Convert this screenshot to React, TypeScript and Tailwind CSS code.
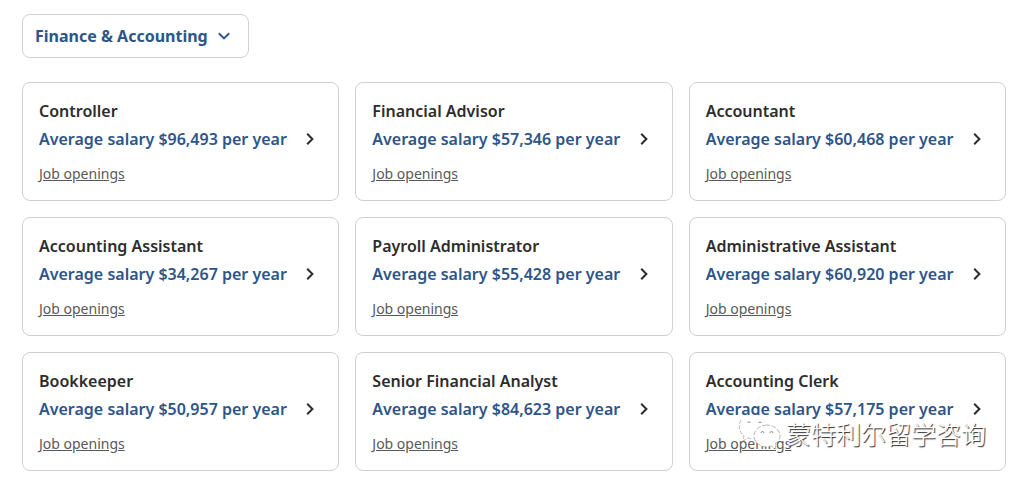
import React, { useState } from 'react';

interface Job {
    title: string;
    salary: string;
}

const categories = ['Finance & Accounting'];

const jobs: Job[] = [
    { title: 'Controller', salary: '$96,493' },
    { title: 'Financial Advisor', salary: '$57,346' },
    { title: 'Accountant', salary: '$60,468' },
    { title: 'Accounting Assistant', salary: '$34,267' },
    { title: 'Payroll Administrator', salary: '$55,428' },
    { title: 'Administrative Assistant', salary: '$60,920' },
    { title: 'Bookkeeper', salary: '$50,957' },
    { title: 'Senior Financial Analyst', salary: '$84,623' },
    { title: 'Accounting Clerk', salary: '$57,175' },
];

const JobCard: React.FC<{ job: Job }> = ({ job }) => (
    <li className="rounded-lg border border-[#d0d0d2] p-4">
        <h2 className="text-base font-semibold text-[#2d2d2d]">{job.title}</h2>
        <a href="#salary" className="mt-1 flex items-center justify-between pr-2 text-base font-semibold text-[#2d5589]">
            <span className="whitespace-nowrap">Average salary {job.salary} per year</span>
            <svg className="ml-2 h-3 w-2 shrink-0" viewBox="0 0 8 12" fill="none" stroke="#2d2d2d" strokeWidth="2">
                <path d="M1.2 0.8 6.4 6 1.2 11.2" />
            </svg>
        </a>
        <a href="#openings" className="mt-3 block w-fit text-sm leading-[21px] text-[#595959] underline">
            Job openings
        </a>
    </li>
);

const Watermark: React.FC = () => (
    <div className="pointer-events-none absolute right-[34px] bottom-7 flex items-center gap-1">
        {/* two chat bubbles */}
        <svg className="h-9 w-11" viewBox="0 0 44 36" fill="#fff" stroke="#999" strokeWidth="0.7">
            <path stroke="none" d="M16-1C8-1 1 5 1 12c0 4 2 7 5 9l-1 5 5-3 6 1c8 0 15-5 15-12S24-1 16-1Z" />
            <path fill="none" strokeDasharray="4 1.5" d="M3 5c-3 5-2 12 3 16l-1 5 5-3 4 1" />
            <path
                strokeDasharray="5 1.5"
                d="M29 10c-7 0-13 5-13 11s6 11 13 11l4-1 5 3-1-5c3-2 5-5 5-8 0-6-6-11-13-11Z"
            />
            <g fill="none" stroke="#666">
                <path d="M9.5 8a1.6 1.6 0 0 1 3 0M20.500 8a1.600 1.600 0 0 1 3 0" />
                <path d="M23 18a1.500 1.500 0 0 1 3 0M32 18a1.500 1.500 0 0 1 3 0" />
            </g>
        </svg>
        <span className="font-['Noto_Sans_CJK_SC',sans-serif] text-[25px] leading-6 font-light text-white [text-shadow:1px_1px_1px_#222]">
            蒙特利尔留学咨询
        </span>
    </div>
);

const App: React.FC = () => {
    const [category, setCategory] = useState(categories[0]);

    return (
        <main className="relative bg-white pt-3.5 pr-3.5 pb-2 pl-[22px] font-['Noto_Sans',sans-serif]">
            <div className="relative w-fit">
                <select
                    aria-label="Category"
                    value={category}
                    onChange={e => setCategory(e.target.value)}
                    className="h-11 appearance-none rounded-lg border border-[#d0d0d2] bg-white pr-10 pl-3 text-base font-bold text-[#2d5589]"
                >
                    {categories.map(c => (
                        <option key={c}>{c}</option>
                    ))}
                </select>
                <svg
                    className="pointer-events-none absolute top-[18px] right-[19px] h-2 w-3"
                    viewBox="0 0 12 8"
                    fill="none"
                    stroke="#2d5589"
                    strokeWidth="2"
                >
                    <path d="M0.8 1.2 6 6.4 11.2 1.2" />
                </svg>
            </div>

            <ul className="mt-6 grid grid-cols-3 gap-4">
                {jobs.map(job => (
                    <JobCard key={job.title} job={job} />
                ))}
            </ul>

            <Watermark />
        </main>
    );
};

export default App;
